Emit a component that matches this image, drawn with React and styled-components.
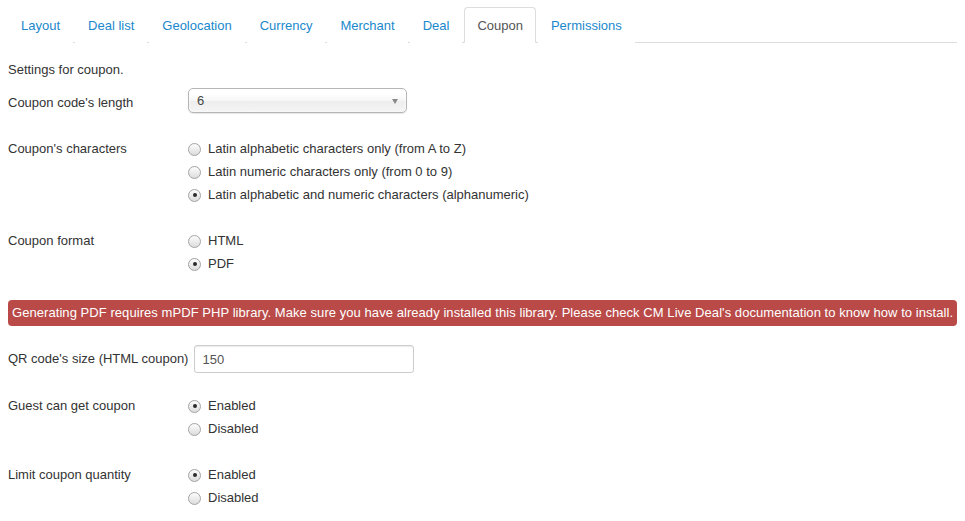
import React from 'react'
import styled, { createGlobalStyle } from 'styled-components'

const GlobalStyle = createGlobalStyle`
    body {
        margin: 0;
        background: #fff;
        font-family: "Liberation Sans", Arial, sans-serif;
        font-size: 13px;
        line-height: 18px;
        color: #333;
    }
`

const Page = styled.div`
    padding: 7px 8px 0 8px;
`

const Tabs = styled.ul`
    display: flex;
    list-style: none;
    margin: 0;
    padding: 0;
    border-bottom: 1px solid #ddd;
`

const Tab = styled.li`
    margin-right: 2px;
    margin-bottom: -1px;
    padding: 9px 12px 7px 12px;
    line-height: 18px;
    border: 1px solid ${props => (props.$active ? '#ddd' : 'transparent')};
    border-bottom-color: ${props => (props.$active ? '#fff' : 'transparent')};
    border-radius: 4px 4px 0 0;
    background: #fff;
    color: ${props => (props.$active ? '#555' : '#1a88cc')};
    cursor: pointer;
`

const Intro = styled.p`
    margin: 18px 0 10px 0;
`

const Row = styled.div`
    display: flex;
    align-items: flex-start;
    margin-bottom: ${props => props.$mb}px;
`

const Label = styled.div`
    flex: 0 0 auto;
    min-width: 174px;
    padding-right: 6px;
    padding-top: ${props => props.$top}px;
`

const Controls = styled.div`
    display: flex;
    flex-direction: column;
`

const Select = styled.div`
    position: relative;
    box-sizing: border-box;
    width: 219px;
    height: 25px;
    margin-top: -1px;
    padding-left: 8px;
    line-height: 24px;
    border: 1px solid #b5b5b5;
    border-radius: 5px;
    background: linear-gradient(#fff 20%, #f6f6f6 50%, #eee 52%, #f4f4f4 100%);
    box-shadow: 0 0 3px #fff inset, 0 1px 1px rgba(0, 0, 0, 0.1);
    color: #444;

    &::after {
        content: '';
        position: absolute;
        right: 8px;
        top: 10px;
        border-left: 3.5px solid transparent;
        border-right: 3.5px solid transparent;
        border-top: 5px solid #888;
    }
`

const RadioLine = styled.label`
    display: flex;
    align-items: center;
    height: 18px;
    padding-top: 6px;
    margin-bottom: -1px;
    gap: 7px;
`

const RadioMark = styled.span`
    position: relative;
    box-sizing: border-box;
    width: 13px;
    height: 13px;
    border: 1px solid #a3a3a3;
    border-radius: 50%;
    background: linear-gradient(#fdfdfd, #dcdcdc);

    &::after {
        content: '';
        display: ${props => (props.$checked ? 'block' : 'none')};
        position: absolute;
        left: 3.5px;
        top: 3.5px;
        width: 4px;
        height: 4px;
        border-radius: 50%;
        background: #2b2b2b;
    }
`

const Alert = styled.div`
    display: inline-block;
    padding: 4px 4px;
    line-height: 18px;
    white-space: nowrap;
    letter-spacing: 0.06px;
    border-radius: 4px;
    background: #b94a48;
    color: #fff;
`

const AlertRow = styled.div`
    margin-bottom: 19px;
`

const Input = styled.input`
    box-sizing: border-box;
    width: 220px;
    height: 28px;
    padding: 4px 7px;
    border: 1px solid #ccc;
    border-radius: 3px;
    box-shadow: inset 0 1px 1px rgba(0, 0, 0, 0.075);
    font-family: inherit;
    font-size: 13px;
    color: #555;
    outline: none;
`

const tabs = ['Layout', 'Deal list', 'Geolocation', 'Currency', 'Merchant', 'Deal', 'Coupon', 'Permissions']

const RadioGroup = ({ options, checked }) => (
    <Controls>
        {options.map((opt, i) => (
            <RadioLine key={opt}>
                <RadioMark $checked={i === checked} />
                {opt}
            </RadioLine>
        ))}
    </Controls>
)

const App = () => {
    return (
        <Page>
            <GlobalStyle />
            <Tabs>
                {tabs.map(t => (
                    <Tab key={t} $active={t === 'Coupon'}>{t}</Tab>
                ))}
            </Tabs>

            <Intro>Settings for coupon.</Intro>

            <Row $mb={21}>
                <Label $top={5}>Coupon code's length</Label>
                <Select>6</Select>
            </Row>

            <Row $mb={23}>
                <Label $top={6}>Coupon's characters</Label>
                <RadioGroup
                    checked={2}
                    options={[
                        'Latin alphabetic characters only (from A to Z)',
                        'Latin numeric characters only (from 0 to 9)',
                        'Latin alphabetic and numeric characters (alphanumeric)',
                    ]}
                />
            </Row>

            <Row $mb={28}>
                <Label $top={6}>Coupon format</Label>
                <RadioGroup checked={1} options={['HTML', 'PDF']} />
            </Row>

            <AlertRow>
                <Alert>
                    Generating PDF requires mPDF PHP library. Make sure you have already installed this library. Please check CM Live Deal's documentation to know how to install.
                </Alert>
            </AlertRow>

            <Row $mb={18}>
                <Label $top={5}>QR code's size (HTML coupon)</Label>
                <Input defaultValue="150" />
            </Row>

            <Row $mb={23}>
                <Label $top={6}>Guest can get coupon</Label>
                <RadioGroup checked={0} options={['Enabled', 'Disabled']} />
            </Row>

            <Row $mb={0}>
                <Label $top={6}>Limit coupon quantity</Label>
                <RadioGroup checked={0} options={['Enabled', 'Disabled']} />
            </Row>
        </Page>
    )
}

export default App
